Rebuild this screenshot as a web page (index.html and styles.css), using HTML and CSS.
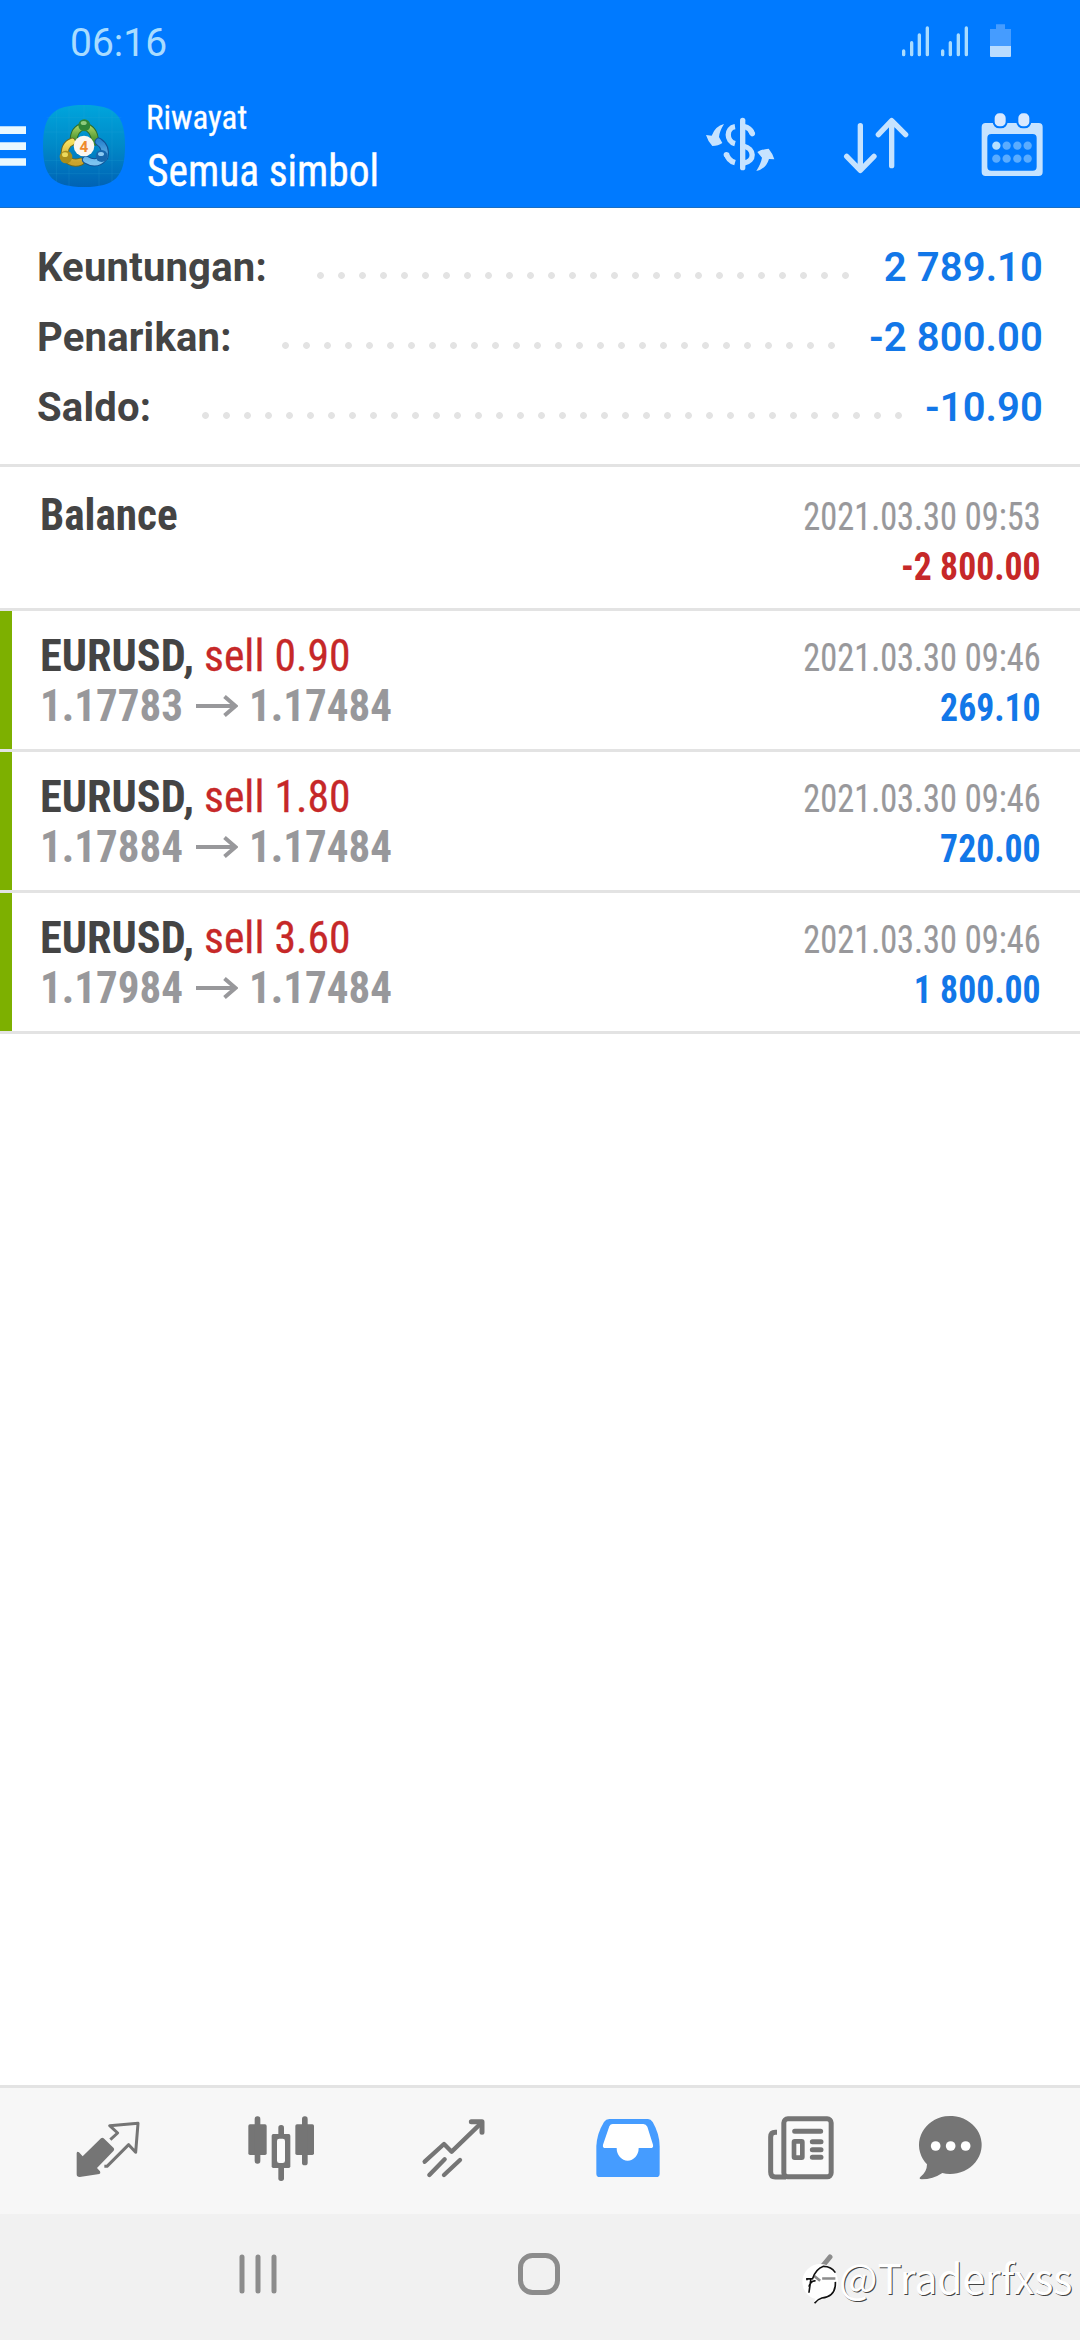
FILE: index.html
```
<!DOCTYPE html>
<html lang="id">
<head>
<meta charset="utf-8">
<title>Riwayat</title>
<link rel="stylesheet" href="styles.css">
</head>
<body>
<div class="screen">
  <header class="header">
    <div class="status">
      <span class="clock">06:16</span>
      <svg class="status-icons" viewBox="660 60 345 120">
        <g stroke="#a9dcff" stroke-width="10" stroke-linecap="round">
          <path d="M671 153V164M695 128V164M718 105V164M742 84V164M788 153V164M811 128V164M835 105V164M859 84V164"/>
        </g>
        <path fill="#459cff" d="M948 73H975V87H993V138H930V87H948Z"/>
        <path fill="#b9dcff" d="M930 138H993V168Q993 171 990 171H933Q930 171 930 168Z"/>
      </svg>
    </div>
    <div class="toolbar">
      <svg class="burger" viewBox="0 368 78 150"><path fill="#e9f9ff" d="M0 384H78V407H0ZM0 432H78V455H0ZM0 480H78V502H0Z"/></svg>
      <svg class="logo" viewBox="129 314 246 246">
        <defs>
          <linearGradient id="bg" x1="0" y1="0" x2="0" y2="1"><stop offset="0" stop-color="#00a5dc"/><stop offset=".5" stop-color="#0089c8"/><stop offset="1" stop-color="#0062b4"/></linearGradient>
          <linearGradient id="gr" x1="0" y1="0" x2="0" y2="1"><stop offset="0" stop-color="#a8d060"/><stop offset="1" stop-color="#3f8f2a"/></linearGradient>
          <linearGradient id="ye" x1="0" y1="0" x2="0" y2="1"><stop offset="0" stop-color="#f6e060"/><stop offset="1" stop-color="#c9a32c"/></linearGradient>
          <linearGradient id="bl" x1="0" y1="0" x2="0" y2="1"><stop offset="0" stop-color="#2c86cf"/><stop offset="1" stop-color="#7cc4f0"/></linearGradient>
        </defs>
        <path fill="url(#bg)" d="M252 314C345 314 375 344 375 437S345 560 252 560S129 530 129 437S159 314 252 314Z"/>
        <path stroke="#2fb0dd" stroke-opacity=".25" stroke-width="2" d="M169 330V545M207 318V557M252 314V360M297 318V557M336 330V545M140 352H364M133 395H371M133 480H371M145 520H360"/>
        <g fill="none" stroke-linecap="round">
          <path stroke="#2d6c2c" stroke-width="24" d="M221 424Q220 385 252 378Q284 385 285 424"/>
          <path stroke="url(#gr)" stroke-width="18" d="M221 424Q220 385 252 378Q284 385 285 424"/>
          <path stroke="#6b6a20" stroke-width="24" d="M216 424Q190 435 195 470Q215 494 242 484"/>
          <path stroke="url(#ye)" stroke-width="18" d="M216 424Q190 435 195 470Q215 494 242 484"/>
          <path stroke="#115295" stroke-width="24" d="M296 424Q320 440 313 470Q290 498 258 478"/>
          <path stroke="url(#bl)" stroke-width="18" d="M296 424Q320 440 313 470Q290 498 258 478"/>
        </g>
        <circle cx="253" cy="375" r="18" fill="#2f8638"/><ellipse cx="251" cy="368" rx="9" ry="6" fill="#8fcb7c"/>
        <circle cx="198" cy="470" r="19" fill="#a98e1c"/><ellipse cx="195" cy="463" rx="9" ry="7" fill="#ecd95c"/>
        <circle cx="305" cy="467" r="18" fill="#1767ad"/><ellipse cx="303" cy="461" rx="9" ry="6" fill="#8dcbf2"/>
        <circle cx="252" cy="437" r="31" fill="#fbf6f0"/>
        <text class="logo-num" x="252" y="454" text-anchor="middle">4</text>
      </svg>
      <div class="titles">
        <div class="sub"><span class="fit">Riwayat</span></div>
        <div class="main"><span class="fit">Semua simbol</span></div>
      </div>
      <div class="actions">
        <svg viewBox="72 330 216 216">
          <g fill="none" stroke="#c6e3ff" stroke-width="16">
            <path stroke-linecap="round" d="M188 361V503"/>
            <path d="M165 380C138 384 138 424 165 431M190 379Q213 384 217 402M190 438C225 446 225 484 192 489M139 460Q144 482 165 488"/>
            <path stroke-linecap="round" d="M212 392L217 401M139 464V464.1"/>
          </g>
          <path fill="#c6e3ff" d="M132 372Q118 395 117 411L127 429Q115 438 97 438Q84 425 78 405L95 407Q106 378 132 372ZM229 513Q243 490 246 473L232 456Q248 447 266 446Q278 460 283 478L267 477Q258 507 229 513Z"/>
        </svg>
        <svg viewBox="480 330 216 216">
          <g fill="none" stroke="#c6e3ff" stroke-width="16" stroke-linecap="round" stroke-linejoin="round">
            <path d="M541 377V508M500 469L541 511L582 469M635 497V364M595 404L635 362L677 404"/>
          </g>
        </svg>
        <svg viewBox="889 330 216 216">
          <path fill="#c6e3ff" fill-rule="evenodd" d="M918 369H1077Q1089 369 1089 381V516Q1089 528 1077 528H918Q906 528 906 516V381Q906 369 918 369ZM935 402Q923 402 923 414V500Q923 512 935 512H1059Q1071 512 1071 500V414Q1071 402 1059 402Z"/>
          <g fill="#d8e9ff" stroke="#007aff" stroke-width="6"><rect x="942" y="337" width="39" height="45" rx="17"/><rect x="1013" y="337" width="39" height="45" rx="17"/></g>
          <circle cx="950" cy="437" r="12.5" fill="#b5e0ff"/>
          <g fill="#5aacff"><circle cx="981" cy="437" r="12.5"/><circle cx="1013" cy="437" r="12.5"/><circle cx="1044" cy="437" r="12.5"/><circle cx="950" cy="476" r="12.5"/><circle cx="981" cy="476" r="12.5"/><circle cx="1013" cy="476" r="12.5"/><circle cx="1044" cy="476" r="12.5"/></g>
        </svg>
      </div>
    </div>
  </header>

  <section class="summary">
    <div class="sum-row"><span>Keuntungan:</span><i class="dots"></i><b>2 789.10</b></div>
    <div class="sum-row"><span>Penarikan:</span><i class="dots"></i><b>-2 800.00</b></div>
    <div class="sum-row"><span>Saldo:</span><i class="dots"></i><b>-10.90</b></div>
  </section>

  <main class="list">
    <article class="deal">
      <div class="left"><div class="title"><b class="balance">Balance</b></div></div>
      <div class="right"><div class="date">2021.03.30 09:53</div><div class="amount loss">-2 800.00</div></div>
    </article>
    <article class="deal won">
      <div class="left"><div class="title"><b>EURUSD,</b> <span class="sell">sell 0.90</span></div>
      <div class="price"><span>1.17783</span><svg class="arrow" viewBox="0 0 42 22"><path d="M0 11H40M28.500 1.500L39.500 11L28.500 20.500"/></svg><span>1.17484</span></div></div>
      <div class="right"><div class="date">2021.03.30 09:46</div><div class="amount">269.10</div></div>
    </article>
    <article class="deal won">
      <div class="left"><div class="title"><b>EURUSD,</b> <span class="sell">sell 1.80</span></div>
      <div class="price"><span>1.17884</span><svg class="arrow" viewBox="0 0 42 22"><path d="M0 11H40M28.500 1.500L39.500 11L28.500 20.500"/></svg><span>1.17484</span></div></div>
      <div class="right"><div class="date">2021.03.30 09:46</div><div class="amount">720.00</div></div>
    </article>
    <article class="deal won">
      <div class="left"><div class="title"><b>EURUSD,</b> <span class="sell">sell 3.60</span></div>
      <div class="price"><span>1.17984</span><svg class="arrow" viewBox="0 0 42 22"><path d="M0 11H40M28.500 1.500L39.500 11L28.500 20.500"/></svg><span>1.17484</span></div></div>
      <div class="right"><div class="date">2021.03.30 09:46</div><div class="amount">1 800.00</div></div>
    </article>
  </main>

  <nav class="tabs">
    <svg viewBox="35 135 216 216">
      <path fill="#757575" d="M122 205Q126 201 130 205L160 234Q163 238 160 242L110 294L119 304Q122 310 117 312L58 321Q49 321 49 313V249Q51 243 56 247L67 259Z"/>
      <path fill="none" stroke="#757575" stroke-width="9" stroke-linejoin="round" d="M150 209L172 189L148 167L233 160L226 247L205 224L140 289H132"/>
    </svg>
    <svg viewBox="552 135 216 216" fill="#757575">
      <rect x="562" y="163" width="55" height="92" rx="5"/><rect x="581" y="139" width="17" height="142" rx="8"/>
      <rect x="703" y="163" width="56" height="92" rx="5"/><rect x="723" y="139" width="17" height="147" rx="8"/>
      <rect x="652" y="165" width="17" height="168" rx="8"/><rect x="632" y="192" width="56" height="102" rx="5"/>
      <rect x="648" y="206" width="24" height="73" rx="7" fill="#fafafa"/>
    </svg>
    <svg viewBox="1073 135 216 216" fill="none" stroke="#757575" stroke-width="13" stroke-linecap="round">
      <path stroke-linejoin="round" d="M1093 275L1151 222L1174 245L1264 158"/>
      <path stroke-width="15" stroke-linejoin="round" d="M1233 155H1265V187"/>
      <path d="M1107 315L1153 268M1151 315L1199 270"/>
    </svg>
    <svg viewBox="154 135 216 216">
      <path fill="#459cff" d="M206 147H322Q330 147 336 156Q357 193 357 228V311Q357 321 347 321H177Q167 321 167 311V228Q169 190 190 156Q196 147 206 147Z"/>
      <path fill="#fff" d="M216 162H308Q316 162 320 170L337 224Q339 234 330 234H294A33 38 0 0 1 228 234H194Q185 234 187 224L206 169Q209 162 216 162Z"/>
    </svg>
    <svg viewBox="77 135 216 216">
      <rect x="133.500" y="146.500" width="142" height="174" rx="12" fill="#fafafa" stroke="#757575" stroke-width="15"/>
      <g fill="none" stroke="#757575" stroke-width="15">
        <path d="M113 187H108Q94 187 94 201V306Q94 321 108 321H140"/>
        <path stroke-linecap="round" d="M166 184H244M219 215H245M219 239H245M219 262H245"/>
        <rect x="164" y="214" width="25" height="49" rx="2" stroke-width="14"/>
      </g>
    </svg>
    <svg viewBox="526 135 216 216">
      <path fill="#757575" d="M562 283A94 87 0 1 1 608 309Q580 328 546 328Q536 327 542 321Q562 306 562 283Z"/>
      <g fill="#fff"><circle cx="588" cy="228" r="14.500"/><circle cx="633" cy="228" r="14.500"/><circle cx="678" cy="228" r="14.500"/></g>
    </svg>
  </nav>

  <footer class="sysnav">
    <svg class="recents" viewBox="0 0 38 40"><path d="M3 3V37M19 3V37M35 3V37"/></svg>
    <svg class="home" viewBox="0 0 42 42"><rect x="2.500" y="2.500" width="37" height="37" rx="12"/></svg>
    <svg class="back" viewBox="0 0 20 40"><path d="M17 3L3 20L17 37"/></svg>
    <div class="credit">
      <svg viewBox="182 575 115 130">
        <circle cx="240" cy="635" r="54" fill="#fff"/>
        <path fill="none" stroke="#8c8c8c" stroke-width="8" d="M222 617L240 632M246 625H286"/>
        <path fill="#fff" d="M225 680L222 702L250 680Z"/>
        <g fill="none" stroke="#111" stroke-width="5"><path d="M200 630V626H212L206 668M216 628Q226 596 250 588Q274 588 286 607M286 635Q288 680 245 684Q232 688 223 700M206 650Q212 630 226 632"/></g>
      </svg>
      <span>@Traderfxss</span>
    </div>
  </footer>
</div>
</body>
</html>
```
FILE: styles.css
```
* { box-sizing: border-box; }
body { margin: 0; background: #fff; }
svg { display: block; flex: none; }
.screen {
  width: 1080px; height: 2340px; overflow: hidden;
  display: flex; flex-direction: column;
  background: #fff; color: #444;
  font-family: "Roboto Condensed", Roboto, sans-serif;
}
.header { height: 208px; background: #007aff; border-bottom: 1px solid #1a6fc4; }
.status { height: 84px; padding: 20px 65px 0 70px; display: flex; justify-content: space-between; }
.clock { font: 39px/46px Roboto, sans-serif; color: #a9dcff; }
.status-icons { width: 115px; height: 40px; }
.toolbar { height: 124px; display: flex; align-items: center; padding-right: 32px; }
.burger { width: 26px; height: 50px; }
.logo { width: 82px; height: 82px; margin-left: 17px; }
.logo-num { font: bold 46px Roboto, sans-serif; fill: #ee8a2c; }
.titles { align-self: flex-start; padding-top: 14px; margin-left: 21px; color: #fff; flex: 1; }
.fit { display: inline-block; transform-origin: left; }
.sub { font-size: 33px; line-height: 40px; }
.sub .fit { -webkit-text-stroke: .3px #fff; }
.main { font-size: 45px; line-height: 54px; margin-top: 6px; }
.main .fit { transform: translateX(1px) scaleX(.922); -webkit-text-stroke: .4px #fff; }
.actions { display: flex; gap: 64px; }
.actions svg { width: 72px; height: 72px; }

.summary { height: 259px; padding: 25px 37px 0; border-bottom: 3px solid #e3e3e3; }
.sum-row { display: flex; height: 70px; align-items: center; font: 700 40px/70px Roboto, sans-serif; }
.sum-row span { letter-spacing: .2px; }
.sum-row b { font-weight: 600; color: #1277e8; letter-spacing: .1px; }
.dots {
  flex: 1; height: 7px; margin: 15px 20.5px 0 50.5px;
  background: radial-gradient(circle at 3.5px 3.5px, #e3e3e3 3px, transparent 3.8px) 0 0 / 21px 7px repeat-x;
}

.deal { position: relative; display: flex; justify-content: space-between; height: 141px; padding: 20px 39px 0 40px; border-bottom: 3px solid #e3e3e3; }
.deal:first-child { height: 144px; padding-top: 23px; }
.won::before { content: ""; position: absolute; left: 0; top: 0; width: 12px; height: 138px; background: #7db000; }
.title, .price { font-size: 45px; line-height: 50px; height: 50px; white-space: nowrap; }
.title b, .title span, .price span { display: inline-block; transform-origin: left; }
.title b { transform: scaleX(.985); margin-right: -3px; }
.title .balance { transform: scaleX(.96); }
.sell { color: #c62828; transform: scaleX(.97); -webkit-text-stroke: .3px #c62828; }
.price { display: flex; align-items: center; font-weight: 700; color: #98989b; }
.price span { transform: scaleX(.957); margin-right: -8px; }
.arrow { width: 42px; height: 22px; margin: 0 11px 0 14px; fill: none; stroke: #98989b; stroke-width: 4; }
.right { text-align: right; font-size: 39px; line-height: 50px; padding-top: 2px; }
.right div { transform-origin: right; }
.date { color: #98989b; transform: scaleX(.88); -webkit-text-stroke: .2px #98989b; }
.amount { font-weight: 700; color: #1277e8; transform: scaleX(.915); }
.amount.loss { color: #c62828; }

.tabs { margin-top: auto; height: 129px; border-top: 3px solid #e3e3e3; background: #f7f7f7; padding-left: 21px; display: grid; grid-template-columns: repeat(5, 173.4px) 126px; justify-items: center; align-items: center; }
.tabs svg { width: 72px; height: 72px; }
.sysnav { height: 126px; background: #f1f1f1; display: flex; align-items: center; padding: 0 0 6px 239px; position: relative; fill: none; stroke: #8c8c8c; stroke-width: 5; }
.recents { width: 38px; height: 40px; stroke-linecap: round; }
.home { width: 42px; height: 42px; margin-left: 241px; }
.back { width: 20px; height: 40px; margin-left: 253px; stroke-linecap: round; }
.credit { position: absolute; left: 801px; top: 48px; display: flex; stroke: none; color: #fff; }
.credit svg { width: 38px; height: 43px; }
.credit span { font: 40.7px/48px "Noto Sans CJK SC", sans-serif; margin: -9px 0 0 0; text-shadow: 1px 1px 0 #444; }
```
